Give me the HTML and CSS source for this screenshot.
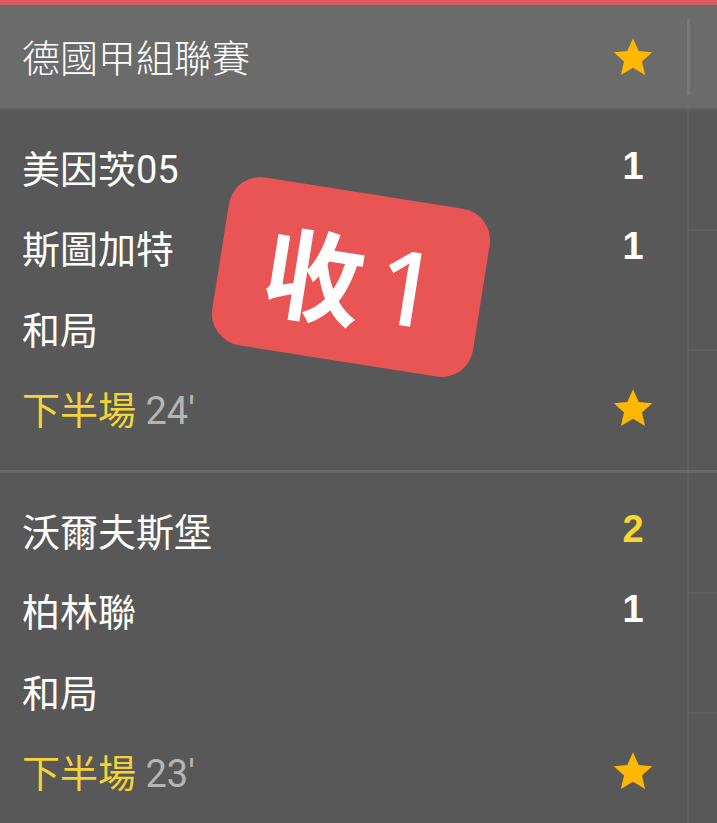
FILE: index.html
```html
<!DOCTYPE html>
<html lang="zh-Hant">
<head>
<meta charset="utf-8">
<link rel="stylesheet" href="styles.css">
</head>
<body>
<div class="topbar"></div>
<div class="league">
  <div class="league-main">
    <span class="league-name">德國甲組聯賽</span>
    <svg class="star" viewBox="0 0 24 24"><path d="M12 1.8l3.1 6.9 7.4.7-5.6 5 1.7 7.4L12 17.9l-6.6 3.9 1.7-7.4-5.6-5 7.4-.7z"/></svg>
  </div>
  <div class="league-side"><span class="vline"></span></div>
</div>

<div class="match">
  <div class="match-main">
    <div class="row"><span class="team">美因茨05</span><span class="score">1</span></div>
    <div class="row"><span class="team">斯圖加特</span><span class="score">1</span></div>
    <div class="row"><span class="team">和局</span></div>
    <div class="row"><span class="status"><span class="half">下半場</span> <span class="min">24'</span></span>
      <svg class="star" viewBox="0 0 24 24"><path d="M12 1.8l3.1 6.9 7.4.7-5.6 5 1.7 7.4L12 17.9l-6.6 3.9 1.7-7.4-5.6-5 7.4-.7z"/></svg></div>
  </div>
  <div class="side"><div class="cell"></div><div class="cell"></div><div class="cell"></div></div>
</div>

<div class="match">
  <div class="match-main">
    <div class="row"><span class="team">沃爾夫斯堡</span><span class="score lead">2</span></div>
    <div class="row"><span class="team">柏林聯</span><span class="score">1</span></div>
    <div class="row"><span class="team">和局</span></div>
    <div class="row"><span class="status"><span class="half">下半場</span> <span class="min">23'</span></span>
      <svg class="star" viewBox="0 0 24 24"><path d="M12 1.8l3.1 6.9 7.4.7-5.6 5 1.7 7.4L12 17.9l-6.6 3.9 1.7-7.4-5.6-5 7.4-.7z"/></svg></div>
  </div>
  <div class="side"><div class="cell"></div><div class="cell"></div><div class="cell"></div></div>
</div>

<div class="badge"><span class="badge-cjk">收</span><span class="badge-num">1</span></div>
</body>
</html>
```
FILE: styles.css
```css
html, body {
  margin: 0;
  padding: 0;
  background: #585858;
  font-family: "Roboto", "Noto Sans CJK TC", sans-serif;
  overflow: hidden;
  width: 717px;
  height: 823px;
}
body { position: relative; }
.topbar {
  height: 5px;
  background: #da5d60;
}
.league {
  display: flex;
  height: 103px;
  background: #6b6b6b;
  border-bottom: 2px solid #616161;
}
.league-main {
  flex: 1;
  display: flex;
  align-items: center;
  justify-content: space-between;
  padding: 0 32px 0 22px;
}
.league-name {
  color: #fff;
  font-family: "Noto Sans CJK TC", sans-serif;
  font-weight: 300;
  font-size: 38px;
  margin-top: -2px;
}
.league-side {
  width: 30px;
  display: flex;
  align-items: center;
}
.vline {
  width: 3px;
  height: 76px;
  background: #787878;
}
.star {
  width: 44px;
  height: 44px;
  fill: #ffb700;
  flex: none;
}
.match {
  display: flex;
  border-bottom: 3px solid #6a6a6a;
}
.match-main {
  flex: 1;
  padding: 16px 32px 22px 22px;
}
.row {
  height: 80.5px;
  display: flex;
  align-items: center;
  justify-content: space-between;
}
.team {
  color: #fff;
  font-size: 38px;
  font-family: "Roboto", "Noto Sans CJK TC", sans-serif;
}
.score {
  color: #fff;
  font-family: "Liberation Sans", sans-serif;
  font-weight: 700;
  font-size: 38px;
  width: 44px;
  text-align: center;
}
.score.lead { color: #fbd531; }
.status { font-size: 38px; }
.half { color: #f5d338; font-family: "Noto Sans CJK TC", sans-serif; }
.min { color: #b5b5b5; font-family: "Roboto", sans-serif; }
.side {
  width: 28px;
  border-left: 2px solid #606060;
  display: flex;
  flex-direction: column;
}
.cell {
  flex: 1;
  border-bottom: 2px solid #606060;
}
.cell:last-child { border-bottom: none; }
.badge {
  position: absolute;
  left: 219px;
  top: 192px;
  width: 264px;
  height: 170px;
  background: #e95455;
  border-radius: 32px;
  transform: rotate(9deg);
  display: flex;
  align-items: center;
  justify-content: center;
  gap: 14px;
  color: #fff;
}
.badge-cjk {
  font-family: "Noto Sans CJK SC", sans-serif;
  font-weight: 700;
  font-size: 100px;
  line-height: 1;
}
.badge-num {
  font-family: "Noto Sans", sans-serif;
  font-weight: 500;
  font-size: 104px;
  line-height: 1;
}
```
